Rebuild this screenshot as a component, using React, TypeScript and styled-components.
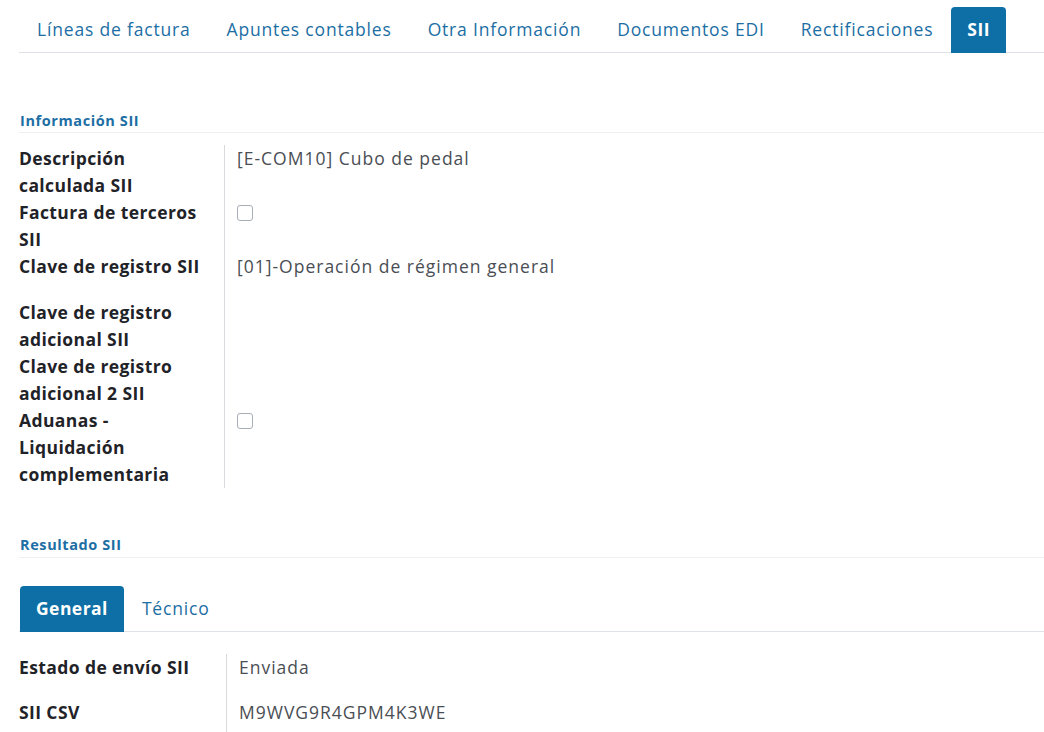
import React from "react";
import styled, { createGlobalStyle } from "styled-components";

const GlobalStyle = createGlobalStyle`
  html, body { margin: 0; padding: 0; background: #ffffff; }
  body { font-family: "Open Sans", "Noto Sans", sans-serif; color: #212529; }
  * { box-sizing: border-box; }
`;

const Page = styled.div`
  width: 1044px;
  height: 732px;
  overflow: hidden;
  padding: 7px 0 0 19px;
`;

const TabBar = styled.div<{ $top?: number; $inset?: number }>`
  display: flex;
  align-items: flex-end;
  border-bottom: 1px solid #dee2e6;
  height: 46px;
  margin-top: ${(p) => p.$top ?? 0}px;
  padding-left: ${(p) => p.$inset ?? 0}px;
`;

const Tab = styled.div<{ $active?: boolean }>`
  height: 46px;
  margin-bottom: -1px;
  display: flex;
  align-items: center;
  padding: ${(p) => (p.$active ? "0 16px 2px" : "0 18px 2px")};
  font-size: 17.5px;
  letter-spacing: ${(p) => (p.$active ? "0.45px" : "0.82px")};
  border-radius: 4px 4px 0 0;
  white-space: nowrap;
  color: ${(p) => (p.$active ? "#ffffff" : "#1c6ea4")};
  background: ${(p) => (p.$active ? "#0d6fa6" : "transparent")};
  font-weight: ${(p) => (p.$active ? 700 : 400)};
`;

const SectionTitle = styled.div<{ $top: number }>`
  margin-top: ${(p) => p.$top}px;
  height: 25px;
  display: flex;
  align-items: center;
  padding-left: 1px;
  font-size: 14.5px;
  letter-spacing: 0.6px;
  font-weight: 700;
  color: #1c6ea4;
  border-bottom: 1px solid #eef0f2;
`;

const FieldGrid = styled.div<{ $top: number; $label: number }>`
  margin-top: ${(p) => p.$top}px;
  display: grid;
  grid-template-columns: ${(p) => p.$label}px 1fr;
`;

const Label = styled.div<{ $h?: number }>`
  font-size: 17.5px;
  font-weight: 700;
  letter-spacing: 0.4px;
  line-height: 27px;
  color: #1f2328;
  padding-right: 16px;
  min-height: ${(p) => (p.$h ? `${p.$h}px` : "auto")};
`;

const Value = styled.div<{ $h?: number }>`
  border-left: 1px solid #d8dadd;
  padding-left: 12px;
  font-size: 17.5px;
  letter-spacing: 1px;
  line-height: 27px;
  color: #4a4e54;
  min-height: ${(p) => (p.$h ? `${p.$h}px` : "auto")};
`;

const Check = styled.span`
  display: inline-block;
  width: 16px;
  height: 16px;
  margin-top: 6px;
  border: 1px solid #a7adb5;
  border-radius: 3px;
  background: #fff;
`;

const rows: { label: string; value?: string; check?: boolean; h?: number }[] = [
  { label: "Descripción calculada SII", value: "[E-COM10] Cubo de pedal" },
  { label: "Factura de terceros SII", check: true },
  { label: "Clave de registro SII", value: "[01]-Operación de régimen general", h: 45.5 },
  { label: "Clave de registro adicional SII" },
  { label: "Clave de registro adicional 2 SII" },
  { label: "Aduanas - Liquidación complementaria", check: true },
];

const results = [
  { label: "Estado de envío SII", value: "Enviada" },
  { label: "SII CSV", value: "M9WVG9R4GPM4K3WE" },
];

export default function App() {
  return (
    <>
      <GlobalStyle />
      <Page>
        <TabBar>
          <Tab>Líneas de factura</Tab>
          <Tab>Apuntes contables</Tab>
          <Tab>Otra Información</Tab>
          <Tab>Documentos EDI</Tab>
          <Tab>Rectificaciones</Tab>
          <Tab $active>SII</Tab>
        </TabBar>

        <SectionTitle $top={55}>Información SII</SectionTitle>
        <FieldGrid $top={12} $label={205}>
          {rows.map((r) => (
            <React.Fragment key={r.label}>
              <Label $h={r.h}>{r.label}</Label>
              <Value $h={r.h}>{r.check ? <Check /> : r.value}</Value>
            </React.Fragment>
          ))}
        </FieldGrid>

        <SectionTitle $top={45}>Resultado SII</SectionTitle>
        <TabBar $top={28} $inset={1}>
          <Tab $active>General</Tab>
          <Tab>Técnico</Tab>
        </TabBar>
        <FieldGrid $top={22} $label={207}>
          {results.map((r) => (
            <React.Fragment key={r.label}>
              <Label $h={45}>{r.label}</Label>
              <Value $h={45}>{r.value}</Value>
            </React.Fragment>
          ))}
        </FieldGrid>
      </Page>
    </>
  );
}
